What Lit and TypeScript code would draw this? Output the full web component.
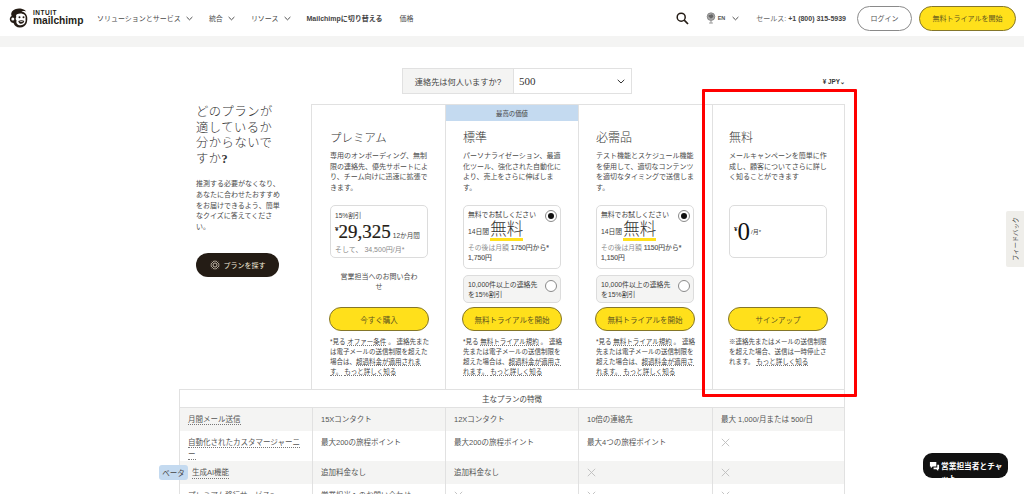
import { LitElement, html, css, svg } from "lit";
import { customElement } from "lit/decorators.js";

const chevron = html`<svg class="chev" viewBox="0 0 8 5" width="7" height="5"><path d="M.7.8 4 4 7.3.8" fill="none" stroke="#333" stroke-width="1"/></svg>`;
const cross = html`<svg class="x" viewBox="0 0 9 9" width="9" height="9"><path d="M.8.8l7.4 7.4M8.2.8.8 8.2" fill="none" stroke="#bdbdbd" stroke-width=".9"/></svg>`;
const sun = svg`<g fill="none" stroke="#f3ead8" stroke-width=".9"><circle cx="6" cy="6" r="2.4"/><path d="M6 .5v2M6 9.500v2M.5 6h2M9.500 6h2M2.100 2.100l1.400 1.400M8.500 8.500l1.400 1.400M2.100 9.900l1.400-1.400M8.500 3.500l1.400-1.400M3.900 1l.6 1.300M8.100 1l-.6 1.300M3.900 11l.6-1.300M8.100 11l-.6-1.300M1 3.900l1.300.6M1 8.100l1.300-.6M11 3.900l-1.300.6M11 8.100l-1.300-.6"/></g>`;

type Plan = {
  title: string; desc: string; cta: string; banner?: string;
  kind: "price" | "trial" | "free"; was?: string; yen?: string; foot: unknown;
};

const under = (t: string) => html`<span class="u">${t}</span>`;
const trialFoot = html`*見る ${under("無料トライアル規約")} 。 連絡先または電子メールの送信制限を超えた場合は、${under("超過料金が適用されます。")} ${under("もっと詳しく知る")}`;

const plans: Plan[] = [
  { title: "プレミアム", kind: "price", cta: "今すぐ購入",
    desc: "専用のオンボーディング、無制限の連絡先、優先サポートにより、チーム向けに迅速に拡張できます。",
    foot: html`*見る ${under("オファー条件")} 。 連絡先または電子メールの送信制限を超えた場合は、${under("超過料金が適用されます。")} ${under("もっと詳しく知る")}` },
  { title: "標準", kind: "trial", cta: "無料トライアルを開始", banner: "最高の価値", was: "1750", yen: "1,750",
    desc: "パーソナライゼーション、最適化ツール、強化された自動化により、売上をさらに伸ばします。", foot: trialFoot },
  { title: "必需品", kind: "trial", cta: "無料トライアルを開始", was: "1150", yen: "1,150",
    desc: "テスト機能とスケジュール機能を使用して、適切なコンテンツを適切なタイミングで送信します。", foot: trialFoot },
  { title: "無料", kind: "free", cta: "サインアップ",
    desc: "メールキャンペーンを簡単に作成し、顧客についてさらに詳しく知ることができます",
    foot: html`※連絡先またはメールの送信制限を超えた場合、送信は一時停止されます。 ${under("もっと詳しく知る")}` },
];

const rows: { h: string; c: (string | null)[]; tall?: boolean; grey?: boolean; beta?: boolean }[] = [
  { h: "月間メール送信", c: ["15Xコンタクト", "12Xコンタクト", "10倍の連絡先", "最大 1,000/月または 500/日"], grey: true },
  { h: "自動化されたカスタマージャーニー", c: ["最大200の旅程ポイント", "最大200の旅程ポイント", "最大4つの旅程ポイント", null], tall: true },
  { h: "生成AI機能", c: ["追加料金なし", "追加料金なし", null, null], grey: true, beta: true },
  { h: "プレミアム移行サービス?", c: ["営業担当へのお問い合わせ", null, null, null] },
];

@customElement("app-root")
export class AppRoot extends LitElement {
  static styles = css`
    :host { display: block; width: 1024px; height: 494px; overflow: hidden; position: relative; background: #fff;
      font-family: "Liberation Sans", "Noto Sans CJK JP", sans-serif; color: #3c3c3c; font-size: 7px; }
    * { box-sizing: border-box; }
    .hdr { height: 36px; display: flex; align-items: center; padding: 0 8px 0 9px; }
    .logo { display: flex; align-items: center; gap: 4px; width: 88px; color: #241c15; }
    .lt { display: flex; flex-direction: column; line-height: 1; font-family: "Liberation Sans", sans-serif; font-weight: 700; }
    .lt .i { font-size: 6.5px; letter-spacing: .5px; }
    .lt .m { font-size: 10.2px; }
    .nav { display: flex; align-items: center; }
    .nav span { display: flex; align-items: center; gap: 5px; white-space: nowrap; color: #4a4a4a; }
    .nav .b { font-weight: 700; color: #444; }
    .right { margin-left: auto; display: flex; align-items: center; }
    .lang { display: flex; align-items: center; gap: 2px; font-size: 5.5px; font-weight: 700; color: #555; margin-left: 17px; }
    .sales { margin-left: 17px; color: #666; white-space: nowrap; }
    .sales b { color: #444; }
    .login { margin-left: 11px; width: 55px; height: 25px; border-radius: 13px; border: 1px solid #8a8a8a; display: flex; align-items: center; justify-content: center; color: #555; }
    .trial { margin-left: 7px; width: 97px; height: 25px; border-radius: 13px; border: 1px solid #84762a; background: #ffe01b; display: flex; align-items: center; justify-content: center; color: #5f5620; }
    .band { height: 11px; background: #f4f4f3; }
    .sel { display: flex; align-items: center; margin: 21px 179px 0 402px; height: 26px; }
    .selbox { display: flex; width: 230px; height: 26px; border: 1.5px solid #e1e1e1; }
    .sell { width: 111px; background: #f4f4f3; border-right: 1.5px solid #e1e1e1; display: flex; align-items: center; justify-content: center; font-size: 8.2px; color: #444; }
    .selv { flex: 1; display: flex; align-items: center; justify-content: space-between; padding: 0 6px 0 5px; font: 11px "Liberation Serif", serif; color: #333; }
    .jpy { margin-left: auto; font-size: 6.3px; font-weight: 700; color: #333; margin-top: 1px; white-space: nowrap; }
    .main { display: flex; margin: 10px 0 0 179px; }
    .side { width: 132px; padding: 1px 0 0 17px; }
    .side h2 { margin: 0; width: 80px; font: 300 12.3px/15.6px "Liberation Serif", "Noto Sans CJK JP", serif; letter-spacing: .5px; color: #333; }
    .side h2 b { font-weight: 700; }
    .side p { margin: 12px 0 0; width: 84px; line-height: 10.7px; color: #4b4b4b; }
    .explore { margin-top: 20px; width: 83px; height: 24px; border-radius: 12px; background: #241c15; color: #f3ead8; display: flex; align-items: center; justify-content: center; gap: 4px; }
    .plans { display: grid; grid-template-columns: 133px 133px 134px 132px; width: 534px; height: 285px; border: 1.5px solid #e1e1e1; border-bottom: 0; }
    .card { display: flex; flex-direction: column; border-left: 1.5px solid #e1e1e1; padding: 0 0 0 17px; min-width: 0; }
    .card:first-child { border-left: 0; padding-left: 18px; }
    .card:last-child { padding-left: 16px; }
    .bn { height: 16px; width: 132px; margin: 0 0 0 -17px; flex: none; display: flex; align-items: center; justify-content: center; font-size: 6.4px; color: #444; }
    .bn.on { background: #c4daf0; }
    .card h3 { margin: 7px 0 0; height: 20px; font: 300 12px/20px "Liberation Serif", "Noto Sans CJK JP", serif; color: #333; }
    .card h3.sp { font-size: 11.4px; letter-spacing: .1px; }
    .desc { width: 98px; height: 54px; margin: 3px 0 0; line-height: 10.6px; color: #4b4b4b; }
    .mid { width: 98px; height: 102px; display: flex; flex-direction: column; gap: 6px; }
    .box { border: 1px solid #dcdcdc; border-radius: 5px; position: relative; }
    .pr { height: 53px; padding: 4px 3px 0 4px; font-size: 6.6px; color: #444; }
    .pr .n { display: flex; align-items: baseline; gap: 2px; margin-top: 1px; white-space: nowrap; }
    .pr .big { font: 400 19px/21px "Liberation Serif", serif; color: #241c15; -webkit-text-stroke: .2px #241c15; }
    .pr .big sup { font-size: 7px; vertical-align: 7px; line-height: 0; }
    .pr .g { color: #8a8a8a; margin-top: 2px; font-size: 7px; white-space: nowrap; }
    .ask { text-align: center; margin-top: 8px; line-height: 9.5px; padding: 0 8px; color: #4b4b4b; }
    .tr { height: 64px; padding: 4px 3px 0 4px; font-size: 6.8px; line-height: 10px; }
    .radio { position: absolute; right: 3px; top: 4px; width: 12px; height: 12px; border-radius: 50%; border: 1px solid #8a8a8a; background: #fff; }
    .radio.on::after { content: ""; position: absolute; inset: 2px; border-radius: 50%; background: #111; }
    .free-row { display: flex; align-items: center; gap: 1px; height: 19px; margin-top: 2px; white-space: nowrap; }
    .free-word { font: 300 16.5px/16px "Liberation Serif", "Noto Sans CJK JP", serif; color: #333; border-bottom: 3px solid #ffe01b; height: 19px; display: block; }
    .tr .g { color: #8f8f8f; margin-top: 2px; line-height: 9.5px; white-space: nowrap; }
    .tr .g b { color: #555; font-weight: 400; -webkit-text-stroke: .15px #555; }
    .alt { height: 28px; background: #f4f4f3; padding: 4px 16px 0 4px; line-height: 9.5px; font-size: 6.9px; }
    .fr { height: 53px; display: flex; align-items: center; gap: 1px; padding: 0 4px; font-size: 6px; }
    .fr .big { font: 400 25px/1 "Liberation Serif", serif; color: #111; }
    .fr sup { font-size: 7px; vertical-align: 9px; line-height: 0; font-weight: 700; }
    .cta { flex: none; width: 100px; margin-left: -1px; height: 24px; border-radius: 12px; background: #ffe01b; border: 1px solid #84762a; display: flex; align-items: center; justify-content: center; font-size: 7.5px; color: #5f5620; white-space: nowrap; }
    .foot { width: 100px; margin: 6px 0 0; font-size: 6.5px; line-height: 10px; color: #444; }
    .u { border-bottom: 1px dotted #777; }
    .tbl { position: relative; margin: 0 0 0 179px; width: 666px; border: 1.5px solid #e1e1e1; border-bottom: 0; font-size: 7.5px; color: #555; }
    .cap { height: 18px; display: flex; align-items: center; justify-content: center; color: #444; border-bottom: 1.5px solid #e1e1e1; }
    .row { display: grid; grid-template-columns: 132px 133px 133px 134px 133px; height: 23px; }
    .row.tall { height: 30px; }
    .row.grey { background: #f4f4f3; }
    .c { border-left: 1.5px solid #e1e1e1; padding: 6px 8px 0; line-height: 12px; }
    .c:first-child { border-left: 0; color: #555; }
    .c .x { display: block; margin-top: 1px; }
    .d { border-bottom: 1px dotted #777; }
    .beta { position: absolute; left: -21px; top: 75px; width: 29px; height: 15px; border-radius: 3px; background: #c4daf0; display: flex; align-items: center; justify-content: center; color: #444; }
    .betaoff { margin-left: 4px; display: inline-block; line-height: 11px; }
    .fb { position: absolute; right: 0; top: 211px; width: 18px; height: 56px; background: #efeeea; border-radius: 2px 0 0 2px; display: flex; align-items: center; justify-content: center; }
    .fb span { writing-mode: vertical-rl; text-orientation: sideways; transform: rotate(180deg); font-size: 6.3px; color: #444; white-space: nowrap; }
    .chat { position: absolute; left: 923px; top: 453px; width: 85px; height: 25px; background: #111; border-radius: 9px; color: #fff; font-weight: 700; overflow: hidden; display: flex; padding: 8px 2px 0 6px; gap: 1px; font-size: 7.7px; line-height: 12px; }
    .chat span { display: block; }
    .red { position: absolute; left: 702px; top: 89px; width: 155px; height: 308px; border: 3px solid #f00; border-radius: 1px; pointer-events: none; }
  `;

  private mid(p: Plan) {
    if (p.kind === "price") return html`
      <div class="box pr"><div>15%割引</div>
        <div class="n"><span class="big"><sup>¥</sup>29,325</span><span>12か月間</span></div>
        <div class="g">そして、 34,500円/月*</div></div>
      <div class="ask">営業担当へのお問い合わせ</div>`;
    if (p.kind === "free") return html`
      <div class="box fr"><span class="big"><sup>¥</sup>0</span><span>/月*</span></div>`;
    return html`
      <div class="box tr"><span class="radio on"></span>
        <div>無料でお試しください</div>
        <div class="free-row"><span>14日間</span><span class="free-word">無料</span></div>
        <div class="g">その後は月額 <b>${p.was}円から*</b><br /><b>${p.yen}円</b></div></div>
      <div class="box alt"><span class="radio"></span>10,000件以上の連絡先を15%割引</div>`;
  }

  render() {
    return html`
      <header class="hdr">
        <div class="logo">
          <svg viewBox="0 0 20 20" width="20" height="20">
            <path fill="#241c15" d="M3 3.5C5 .8 9 0 12.5.7c2 .4 3.6 1.4 4.6 2.8-1.6-.5-3.2-.6-4.6-.3 2.6.6 4.8 2.4 5.5 5 .5 2 .4 4.6-.3 6.8-.9 2.8-3.8 4.6-7 4.500-3-.1-5.400-1.800-6-4.300C3 15.200 1 13.800.8 11.600.6 10 1.400 8.600 2.700 8 2 6.500 2 5 3 3.500Z"/>
            <path fill="#fff" d="M8 6.200c2.500-1.200 6-.9 7.700.8 1 1.100 1.100 2.600.8 4.100.5 2-.2 4.300-2.200 5.500-2 1.200-5 .9-6.300-.8-.7-1-.8-2.300-.4-3.400-1.200-.8-1.100-2.600-.2-3.500C6.800 7.800 7 6.800 8 6.200Z"/>
            <path fill="#241c15" d="M9.300 13c1.700-1 4.800-1 6 0-.3 1.900-2.200 2.900-3.800 2.700-1.200-.1-2-1.200-2.200-2.700Z"/>
            <path fill="#fff" d="M10.300 13.500c1.300-.4 3-.4 4 0-.8.500-3.100.6-4 0Z"/>
            <circle cx="10.500" cy="9.300" r="1" fill="#241c15"/><circle cx="14.500" cy="9.300" r="1" fill="#241c15"/>
            <circle cx="3.800" cy="11" r="1.500" fill="#fff"/>
          </svg>
          <div class="lt"><span class="i">INTUIT</span><span class="m">mailchimp</span></div>
        </div>
        <nav class="nav">
          <span>ソリューションとサービス ${chevron}</span>
          <span style="margin-left:16px">統合 ${chevron}</span>
          <span style="margin-left:16px">リソース ${chevron}</span>
          <span class="b" style="margin-left:16px">Mailchimpに切り替える</span>
          <span style="margin-left:17px">価格</span>
        </nav>
        <div class="right">
          <svg viewBox="0 0 13 13" width="13" height="13"><circle cx="5.200" cy="5.200" r="4" fill="none" stroke="#241c15" stroke-width="1.500"/><path d="M8.200 8.200 12 12" stroke="#241c15" stroke-width="1.700" fill="none"/></svg>
          <div class="lang">
            <svg viewBox="0 0 11 13" width="10" height="12"><circle cx="5.500" cy="5" r="4.200" fill="#aaa" stroke="#777" stroke-width=".8"/><path d="M2.500 4c1.500-1.800 3.500-1 4-2 1 1 2 2 1.500 3.500-1.300.6-1.500 1.700-3 1.500C4.500 5.500 3 6 2.500 4Z" fill="#666"/><path d="M5.500 9.500v2M3.500 12h4" stroke="#777" stroke-width=".9" fill="none"/></svg>
            <span>EN</span><span style="margin-left:5px;display:flex">${chevron}</span>
          </div>
          <span class="sales">セールス: <b>+1 (800) 315-5939</b></span>
          <div class="login">ログイン</div>
          <div class="trial">無料トライアルを開始</div>
        </div>
      </header>
      <div class="band"></div>
      <div class="sel">
        <div class="selbox">
          <div class="sell">連絡先は何人いますか?</div>
          <div class="selv"><span>500</span><svg viewBox="0 0 8 5" width="8" height="5"><path d="M.7.8 4 4 7.300.8" fill="none" stroke="#333" stroke-width="1"/></svg></div>
        </div>
        <span class="jpy">¥ JPY⌄</span>
      </div>
      <div class="main">
        <aside class="side">
          <h2>どのプランが適しているか分からないですか<b>?</b></h2>
          <p>推測する必要がなくなり、あなたに合わせたおすすめをお届けできるよう、簡単なクイズに答えてください。</p>
          <div class="explore"><svg viewBox="0 0 12 12" width="10" height="10">${sun}</svg>プランを探す</div>
        </aside>
        <section class="plans">
          ${plans.map((p) => html`
            <article class="card">
              <div class="bn ${p.banner ? "on" : ""}">${p.banner ?? ""}</div>
              <h3 class="${p.kind === "price" ? "sp" : ""}">${p.title}</h3>
              <p class="desc">${p.desc}</p>
              <div class="mid">${this.mid(p)}</div>
              <div class="cta">${p.cta}</div>
              <p class="foot">${p.foot}</p>
            </article>`)}
        </section>
      </div>
      <section class="tbl">
        <div class="cap">主なプランの特徴</div>
        ${rows.map((r) => html`
          <div class="row ${r.tall ? "tall" : ""} ${r.grey ? "grey" : ""}">
            <div class="c"><span class="d ${r.beta ? "betaoff" : ""}">${r.h}</span></div>
            ${r.c.map((v) => html`<div class="c">${v ?? cross}</div>`)}
          </div>`)}
        <div class="beta">ベータ</div>
      </section>
      <div class="fb"><span>フィードバック</span></div>
      <div class="chat">
        <svg viewBox="0 0 12 12" width="11" height="11" style="flex:none"><path d="M1 1h7v5H4L2 8V6H1Z" fill="#fff"/><path d="M9 4h2v5h-1v2L8 9H5V7h4Z" fill="#fff"/></svg>
        <span>営業担当者とチャット</span>
      </div>
      <div class="red"></div>
    `;
  }
}
